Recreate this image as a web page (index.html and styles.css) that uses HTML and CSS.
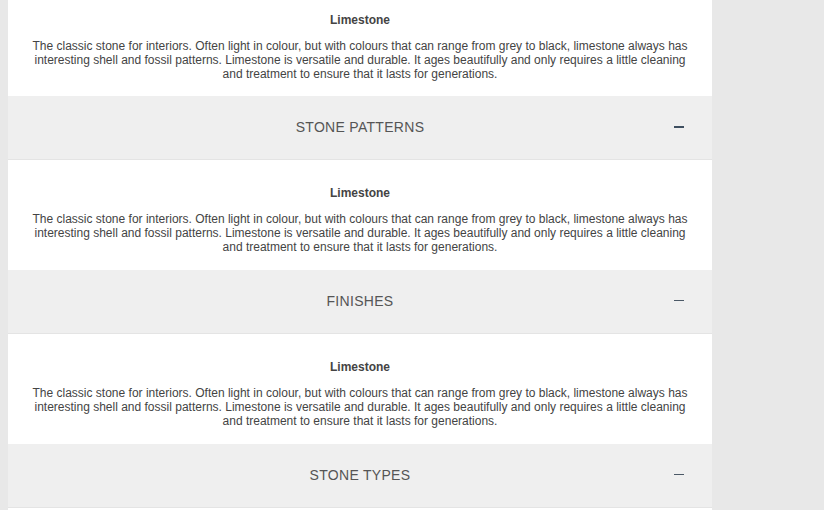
FILE: index.html
```html
<!DOCTYPE html>
<html>
<head>
<meta charset="utf-8">
<link rel="stylesheet" href="styles.css">
</head>
<body>
<div class="accordion">
  <div class="panel-body panel-body--first">
    <h4 class="panel-title">Limestone</h4>
    <p class="panel-text">The classic stone for interiors. Often light in colour, but with colours that can range from grey to black, limestone always has interesting shell and fossil patterns. Limestone is versatile and durable. It ages beautifully and only requires a little cleaning and treatment to ensure that it lasts for generations.</p>
  </div>
  <div class="panel-head">
    <span class="panel-label">STONE PATTERNS</span>
    <span class="panel-toggle panel-toggle--bold"></span>
  </div>
  <div class="panel-body">
    <h4 class="panel-title">Limestone</h4>
    <p class="panel-text">The classic stone for interiors. Often light in colour, but with colours that can range from grey to black, limestone always has interesting shell and fossil patterns. Limestone is versatile and durable. It ages beautifully and only requires a little cleaning and treatment to ensure that it lasts for generations.</p>
  </div>
  <div class="panel-head">
    <span class="panel-label">FINISHES</span>
    <span class="panel-toggle"></span>
  </div>
  <div class="panel-body">
    <h4 class="panel-title">Limestone</h4>
    <p class="panel-text">The classic stone for interiors. Often light in colour, but with colours that can range from grey to black, limestone always has interesting shell and fossil patterns. Limestone is versatile and durable. It ages beautifully and only requires a little cleaning and treatment to ensure that it lasts for generations.</p>
  </div>
  <div class="panel-head">
    <span class="panel-label">STONE TYPES</span>
    <span class="panel-toggle"></span>
  </div>
  <div class="panel-body panel-body--last"></div>
</div>
</body>
</html>
```
FILE: styles.css
```css
html, body {
  margin: 0;
  padding: 0;
  background: #e8e8e8;
  font-family: "Liberation Sans", Arial, sans-serif;
}
body {
  padding: 0 8px;
  height: 510px;
  overflow: hidden;
}
.accordion {
  width: 704px;
}
.panel-body {
  background: #ffffff;
  padding: 26px 24px 16px;
  text-align: center;
  color: #444444;
}
.panel-body--first {
  padding-top: 13px;
  padding-bottom: 15px;
}
.panel-body--last {
  height: 20px;
}
.panel-title {
  margin: 0 0 12px;
  font-size: 12px;
  line-height: 14px;
  font-weight: bold;
}
.panel-text {
  margin: 0;
  font-size: 12px;
  line-height: 14px;
}
.panel-head {
  display: grid;
  grid-template-columns: 1fr auto 1fr;
  align-items: center;
  height: 61px;
  padding-bottom: 2px;
  background: #efefef;
  border-bottom: 1px solid #e4e4e4;
}
.panel-label {
  grid-column: 2;
  font-size: 14px;
  letter-spacing: 0.3px;
  color: #555555;
}
.panel-toggle {
  grid-column: 3;
  justify-self: end;
  width: 10px;
  height: 1px;
  margin-right: 28px;
  background: #4a5866;
}
.panel-toggle--bold {
  height: 2px;
  background: #3e4f60;
}
```
